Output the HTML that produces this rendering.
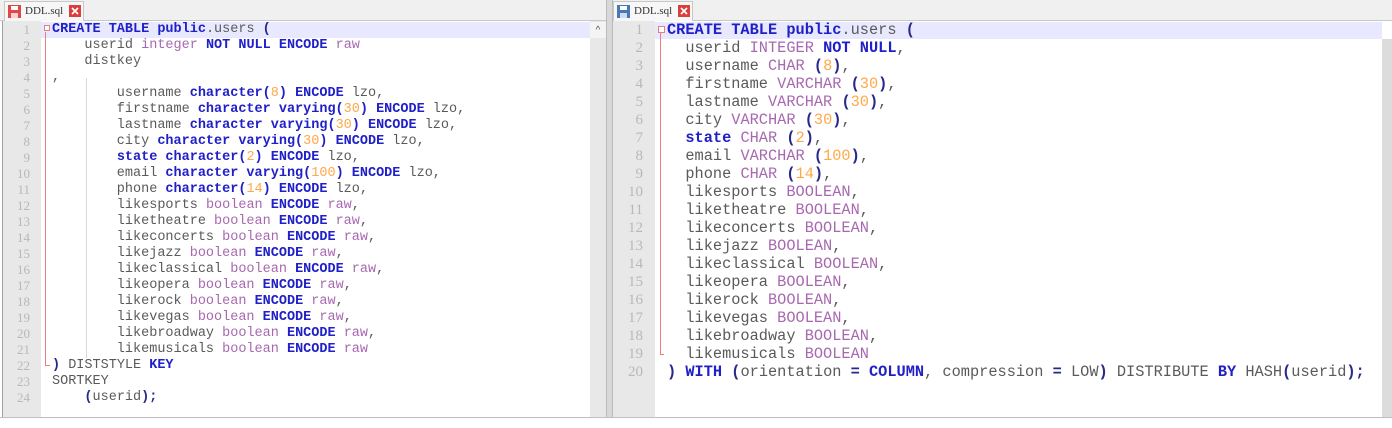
<!DOCTYPE html>
<html><head><meta charset="utf-8">
<style>
*{margin:0;padding:0;box-sizing:border-box}
body{width:1392px;height:428px;background:#fff;position:relative;overflow:hidden;font-family:"Liberation Mono",monospace}
.abs{position:absolute}
.tabbar{background:#f0f0f0;height:21px;top:0;border-bottom:1px solid #c8c8c8}
.tab{top:1px;height:20px;background:#f7f7f7;border:1px solid #c8c8c8;border-bottom:none;font-family:"Liberation Serif",serif;font-size:11px;color:#333;line-height:19px}
.gut{background:#e8e8e8;top:21px}
.ln{color:#b8b8b8;text-align:right;font-family:"Liberation Serif",serif}
.code{white-space:pre;color:#5a5a5a}
.k{color:#2020c8;font-weight:bold}
.t{color:#a868b0}
.n{color:#ffa848}
.p{color:#282888;font-weight:bold}
</style></head><body>
<!-- left panel -->
<div class="abs tabbar" style="left:0;width:606px"></div>
<div class="abs tab" style="left:4px;width:80px">
<svg class="abs" style="left:3px;top:3px" width="13" height="13"><rect width="13" height="13" fill="#e04848"/><rect x="3" y="1" width="7" height="4" fill="#fff"/><rect x="3" y="8" width="7" height="5" fill="#f8d0d0"/></svg>
<span class="abs" style="left:20px;top:0">DDL.sql</span>
<svg class="abs" style="left:64px;top:3px" width="12" height="12"><rect width="12" height="12" fill="#d84040"/><path d="M3 3L9 9M9 3L3 9" stroke="#fff" stroke-width="1.6"/></svg>
</div>
<div class="abs" style="left:2px;top:21px;width:1px;height:397px;background:#a0a0a0"></div>
<div class="abs gut" style="left:3px;width:38px;height:397px"></div>
<div class="abs" style="left:41px;top:22px;width:549px;height:16px;background:#e8e8ff"></div>
<div class="abs" style="left:45px;top:32px;width:1px;height:334px;background:#e88080"></div>
<div class="abs" style="left:44px;top:25px;width:6px;height:6px;border:1px solid #e88080;background:#fff"></div>
<div class="abs" style="left:46px;top:365px;width:4px;height:1px;background:#e88080"></div>
<div class="abs" style="left:86px;top:78px;width:1px;height:280px;background:#d8d8d8"></div>
<div class="abs" style="left:590px;top:21px;width:16px;height:397px;background:#e8e8e8"></div>
<div class="abs" style="left:590px;top:22px;width:16px;height:16px;background:#f4f4f4;color:#555;font-size:10px;text-align:center;line-height:18px;font-family:'Liberation Sans',sans-serif">^</div>
<div class="abs" style="left:606px;top:0;width:7px;height:418px;background:#d8d8d8;border-left:1px solid #bbb;border-right:1px solid #bbb"></div>
<div class="abs ln" style="left:3px;top:22px;width:27px;font-size:13px;line-height:16px">1<br>2<br>3<br>4<br>5<br>6<br>7<br>8<br>9<br>10<br>11<br>12<br>13<br>14<br>15<br>16<br>17<br>18<br>19<br>20<br>21<br>22<br>23<br>24</div>
<div class="abs code" style="left:52px;top:22px;font-size:13.5px;line-height:16px"><span class="k">CREATE TABLE public</span>.users <span class="p">(</span>
    userid <span class="t">integer</span> <span class="k">NOT NULL ENCODE</span> <span class="t">raw</span>
    distkey
,
        username <span class="k">character(</span><span class="n">8</span><span class="k">)</span> <span class="k">ENCODE</span> lzo,
        firstname <span class="k">character varying(</span><span class="n">30</span><span class="k">)</span> <span class="k">ENCODE</span> lzo,
        lastname <span class="k">character varying(</span><span class="n">30</span><span class="k">)</span> <span class="k">ENCODE</span> lzo,
        city <span class="k">character varying(</span><span class="n">30</span><span class="k">)</span> <span class="k">ENCODE</span> lzo,
        <span class="k">state character(</span><span class="n">2</span><span class="k">)</span> <span class="k">ENCODE</span> lzo,
        email <span class="k">character varying(</span><span class="n">100</span><span class="k">)</span> <span class="k">ENCODE</span> lzo,
        phone <span class="k">character(</span><span class="n">14</span><span class="k">)</span> <span class="k">ENCODE</span> lzo,
        likesports <span class="t">boolean</span> <span class="k">ENCODE</span> <span class="t">raw</span>,
        liketheatre <span class="t">boolean</span> <span class="k">ENCODE</span> <span class="t">raw</span>,
        likeconcerts <span class="t">boolean</span> <span class="k">ENCODE</span> <span class="t">raw</span>,
        likejazz <span class="t">boolean</span> <span class="k">ENCODE</span> <span class="t">raw</span>,
        likeclassical <span class="t">boolean</span> <span class="k">ENCODE</span> <span class="t">raw</span>,
        likeopera <span class="t">boolean</span> <span class="k">ENCODE</span> <span class="t">raw</span>,
        likerock <span class="t">boolean</span> <span class="k">ENCODE</span> <span class="t">raw</span>,
        likevegas <span class="t">boolean</span> <span class="k">ENCODE</span> <span class="t">raw</span>,
        likebroadway <span class="t">boolean</span> <span class="k">ENCODE</span> <span class="t">raw</span>,
        likemusicals <span class="t">boolean</span> <span class="k">ENCODE</span> <span class="t">raw</span>
<span class="p">)</span> DISTSTYLE <span class="k">KEY</span>
SORTKEY
    <span class="p">(</span>userid<span class="p">);</span></div>
<div class="abs" style="left:0;top:417px;width:613px;height:1px;background:#c0c0c0"></div>

<!-- right panel -->
<div class="abs tabbar" style="left:613px;width:779px"></div>
<div class="abs tab" style="left:613px;width:80px">
<svg class="abs" style="left:3px;top:3px" width="13" height="13"><rect width="13" height="13" fill="#4878b8"/><rect x="3" y="1" width="7" height="4" fill="#fff"/><rect x="3" y="8" width="7" height="5" fill="#d0dcf0"/></svg>
<span class="abs" style="left:20px;top:0">DDL.sql</span>
<svg class="abs" style="left:64px;top:3px" width="12" height="12"><rect width="12" height="12" fill="#d84040"/><path d="M3 3L9 9M9 3L3 9" stroke="#fff" stroke-width="1.6"/></svg>
</div>
<div class="abs gut" style="left:613px;width:42px;height:396px"></div>
<div class="abs" style="left:655px;top:22px;width:727px;height:17px;background:#e8e8ff"></div>
<div class="abs" style="left:660px;top:33px;width:1px;height:322px;background:#e88080"></div>
<div class="abs" style="left:658px;top:26px;width:7px;height:7px;border:1px solid #e88080;background:#fff"></div>
<div class="abs" style="left:660px;top:354px;width:4px;height:1px;background:#e88080"></div>
<div class="abs" style="left:1382px;top:39px;width:10px;height:379px;background:#dcdcdc"></div>
<div class="abs ln" style="left:613px;top:21px;width:30px;font-size:15px;line-height:18px">1<br>2<br>3<br>4<br>5<br>6<br>7<br>8<br>9<br>10<br>11<br>12<br>13<br>14<br>15<br>16<br>17<br>18<br>19<br>20</div>
<div class="abs code" style="left:667px;top:21px;font-size:15.3px;line-height:18px"><span class="k">CREATE TABLE public</span>.users <span class="p">(</span>
  userid <span class="t">INTEGER</span> <span class="k">NOT NULL</span>,
  username <span class="t">CHAR</span> <span class="p">(</span><span class="n">8</span><span class="p">)</span>,
  firstname <span class="t">VARCHAR</span> <span class="p">(</span><span class="n">30</span><span class="p">)</span>,
  lastname <span class="t">VARCHAR</span> <span class="p">(</span><span class="n">30</span><span class="p">)</span>,
  city <span class="t">VARCHAR</span> <span class="p">(</span><span class="n">30</span><span class="p">)</span>,
  <span class="k">state</span> <span class="t">CHAR</span> <span class="p">(</span><span class="n">2</span><span class="p">)</span>,
  email <span class="t">VARCHAR</span> <span class="p">(</span><span class="n">100</span><span class="p">)</span>,
  phone <span class="t">CHAR</span> <span class="p">(</span><span class="n">14</span><span class="p">)</span>,
  likesports <span class="t">BOOLEAN</span>,
  liketheatre <span class="t">BOOLEAN</span>,
  likeconcerts <span class="t">BOOLEAN</span>,
  likejazz <span class="t">BOOLEAN</span>,
  likeclassical <span class="t">BOOLEAN</span>,
  likeopera <span class="t">BOOLEAN</span>,
  likerock <span class="t">BOOLEAN</span>,
  likevegas <span class="t">BOOLEAN</span>,
  likebroadway <span class="t">BOOLEAN</span>,
  likemusicals <span class="t">BOOLEAN</span>
<span class="p">)</span> <span class="k">WITH</span> <span class="p">(</span>orientation <span class="p">=</span> <span class="k">COLUMN</span>, compression <span class="p">=</span> LOW<span class="p">)</span> DISTRIBUTE <span class="k">BY</span> HASH<span class="p">(</span>userid<span class="p">);</span></div>
<div class="abs" style="left:613px;top:417px;width:779px;height:1px;background:#c0c0c0"></div>
</body></html>
